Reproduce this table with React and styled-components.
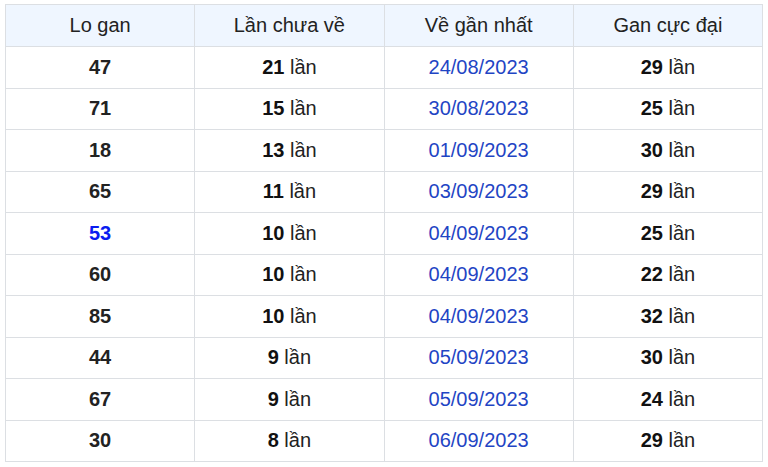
import styled, { createGlobalStyle } from "styled-components";

const GlobalStyle = createGlobalStyle`
  body {
    margin: 0;
    background: #fff;
    font-family: "Liberation Sans", Arial, sans-serif;
  }
`;

const Wrap = styled.div`
  padding: 4px 5px;
`;

const Table = styled.table`
  width: 758px;
  border-collapse: collapse;
  table-layout: fixed;
  font-size: 20px;
  line-height: 23px;
  color: #111;
`;

const Th = styled.th`
  height: 41px;
  padding: 0;
  background: #eff6ff;
  border: 1px solid #dcdfe3;
  font-weight: 400;
  color: #222;
  text-align: center;
`;

const Td = styled.td`
  height: 40.5px;
  padding: 0;
  border: 1px solid #dcdfe3;
  text-align: center;
  color: ${({ $tone }) =>
    $tone === "date" ? "#1f45c4" : $tone === "hot" ? "#0a1cf0" : "#222"};
  font-weight: ${({ $bold }) => ($bold ? 700 : 400)};
`;

const Num = styled.b`
  font-weight: 700;
  color: #111;
`;

const rows = [
  ["47", 21, "24/08/2023", 29],
  ["71", 15, "30/08/2023", 25],
  ["18", 13, "01/09/2023", 30],
  ["65", 11, "03/09/2023", 29],
  ["53", 10, "04/09/2023", 25, true],
  ["60", 10, "04/09/2023", 22],
  ["85", 10, "04/09/2023", 32],
  ["44", 9, "05/09/2023", 30],
  ["67", 9, "05/09/2023", 24],
  ["30", 8, "06/09/2023", 29],
];

export default function App() {
  return (
    <>
      <GlobalStyle />
      <Wrap>
        <Table>
          <thead>
            <tr>
              <Th>Lo gan</Th>
              <Th>Lần chưa về</Th>
              <Th>Về gần nhất</Th>
              <Th>Gan cực đại</Th>
            </tr>
          </thead>
          <tbody>
            {rows.map(([lo, miss, date, max, hot]) => (
              <tr key={lo}>
                <Td $bold $tone={hot ? "hot" : undefined}>
                  {lo}
                </Td>
                <Td>
                  <Num>{miss}</Num> lần
                </Td>
                <Td $tone="date">{date}</Td>
                <Td>
                  <Num>{max}</Num> lần
                </Td>
              </tr>
            ))}
          </tbody>
        </Table>
      </Wrap>
    </>
  );
}
